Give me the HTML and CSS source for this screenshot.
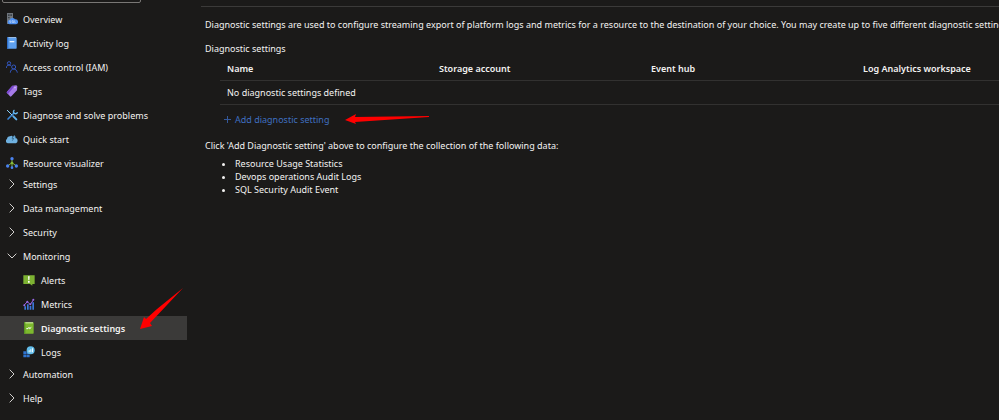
FILE: index.html
```html
<!DOCTYPE html>
<html lang="en">
<head>
    <meta charset="UTF-8">
    <meta name="viewport" content="width=device-width, initial-scale=1.0">
    <title>Diagnostic settings</title>
    <link rel="stylesheet" href="styles.css">
</head>
<body>

    <div class="layout">
        <nav class="sidebar">
            <input class="search" type="search" aria-label="Search">

            <ul class="menu">
                <li><a class="item" href="#">
                    <svg class="icon" viewBox="0 0 36 36">
                        <path fill="#6f757c" d="M3 0h18v33H3z"/>
                        <path fill="#3c4248" d="M6 4h5v5H6zM13 4h5v5h-5zM6 12h5v4H6z"/>
                        <path fill="#4d8ff0" d="M12 34a6 6 0 0 1-1-13 9 9 0 0 1 16-2 7 7 0 0 1 3 15z"/>
                        <path fill="none" stroke="#d8e9ff" stroke-width="1.6" d="M14 23h-3v3h3v3h-3M18 23h4v5h-4zM21 27l2 3M26 22v7h3"/>
                    </svg>
                    Overview
                </a></li>
                <li><a class="item" href="#">
                    <svg class="icon" viewBox="0 0 36 36">
                        <rect x="3" y="1" width="29" height="34" rx="2" fill="#5ea0ef"/>
                        <path fill="#2f6fc9" d="M3 1h4v34H5a2 2 0 0 1-2-2z"/>
                        <path fill="#c5dffa" d="M7 1h23v2H7z"/>
                        <path fill="#eaf4ff" d="M11 12h14v4H11z"/>
                    </svg>
                    Activity log
                </a></li>
                <li><a class="item" href="#">
                    <svg class="icon" viewBox="0 0 36 36" fill="none" stroke="#3357c0" stroke-width="3">
                        <circle cx="9" cy="7" r="5"/>
                        <path d="M1 21c0-6 4-9 8-9 3 0 5 1 6 3"/>
                        <circle cx="23" cy="18" r="6"/>
                        <path d="M13 35c0-7 5-11 10-11s10 4 11 11"/>
                    </svg>
                    Access control (IAM)
                </a></li>
                <li><a class="item" href="#">
                    <svg class="icon" viewBox="0 0 36 36">
                        <path fill="#a67be8" d="M19 2l12-1 3 3-1 12-17 18q-2 2-4 0L3 24q-2-2 0-4z"/>
                        <path fill="#7a48d0" d="M19 2L3 20q-2 2 0 4l3 3L25 4z"/>
                        <circle cx="27" cy="8" r="2" fill="#e6d8ff"/>
                    </svg>
                    Tags
                </a></li>
                <li><a class="item" href="#">
                    <svg class="icon" viewBox="0 0 36 36" fill="none" stroke-linecap="round">
                        <path stroke="#3a86d6" stroke-width="5" d="M6 30L24 12"/>
                        <path stroke="#66b8f0" stroke-width="4" d="M24 4q-4 6 1 9 4 3 9-2"/>
                        <path stroke="#8ed2fa" stroke-width="3" d="M4 4l14 14"/>
                        <path stroke="#5fb2ee" stroke-width="6" d="M22 22l9 9"/>
                    </svg>
                    Diagnose and solve problems
                </a></li>
                <li><a class="item" href="#">
                    <svg class="icon" viewBox="0 0 36 36">
                        <path fill="#6fb1e0" d="M7 31a7 7 0 0 1-4-13 9 9 0 0 1 9-8l5-2 4 3 5-4 4 8a9 9 0 0 1 0 16z"/>
                        <path fill="none" stroke="#23506f" stroke-width="2" d="M22 8l-4 8h5l-4 7M27 10l2 6"/>
                    </svg>
                    Quick start
                </a></li>
                <li><a class="item" href="#">
                    <svg class="icon" viewBox="0 0 36 36">
                        <path fill="none" stroke="#86b93a" stroke-width="3" d="M18 6v24M18 17L5 27M18 17l13 10"/>
                        <g fill="#4a83f0">
                            <circle cx="18" cy="5" r="5"/>
                            <circle cx="5" cy="27" r="5"/>
                            <circle cx="31" cy="27" r="5"/>
                            <circle cx="18" cy="32" r="4"/>
                        </g>
                        <circle cx="18" cy="18" r="4" fill="#86b93a"/>
                    </svg>
                    Resource visualizer
                </a></li>
            </ul>

            <ul class="groups">
                <li class="group">
                    <button class="group-title" aria-expanded="false">
                        <svg class="icon chevron" viewBox="0 0 36 36"><path d="M11 5l13 13-13 13"/></svg>
                        Settings
                    </button>
                </li>
                <li class="group">
                    <button class="group-title" aria-expanded="false">
                        <svg class="icon chevron" viewBox="0 0 36 36"><path d="M11 5l13 13-13 13"/></svg>
                        Data management
                    </button>
                </li>
                <li class="group">
                    <button class="group-title" aria-expanded="false">
                        <svg class="icon chevron" viewBox="0 0 36 36"><path d="M11 5l13 13-13 13"/></svg>
                        Security
                    </button>
                </li>
                <li class="group open">
                    <button class="group-title" aria-expanded="true">
                        <svg class="icon chevron" viewBox="0 0 36 36"><path d="M5 11l13 13 13-13"/></svg>
                        Monitoring
                    </button>
                    <ul class="submenu">
                        <li><a class="subitem" href="#">
                            <svg class="icon" viewBox="0 0 36 36">
                                <path fill="#7db232" d="M1 4h34v26h-7v5l-7-5H1z"/>
                                <path fill="#fff" d="M15 7h5l-1 12h-3zM15 21h5v5h-5z"/>
                            </svg>
                            Alerts
                        </a></li>
                        <li><a class="subitem" href="#">
                            <svg class="icon" viewBox="0 0 36 36">
                                <path fill="#3b77d8" d="M4 25h5v10H4zM12 19h5v16h-5zM20 24h5v11h-5zM28 13h5v22h-5z"/>
                                <path fill="none" stroke="#9a68e8" stroke-width="3" d="M3 22l10-11 9 9L32 4"/>
                                <g fill="#9a68e8">
                                    <circle cx="4" cy="22" r="3"/>
                                    <circle cx="13" cy="11" r="3"/>
                                    <circle cx="22" cy="19" r="3"/>
                                    <circle cx="31" cy="5" r="3"/>
                                </g>
                            </svg>
                            Metrics
                        </a></li>
                        <li><a class="subitem selected" href="#" aria-current="page">
                            <svg class="icon" viewBox="0 0 36 36">
                                <rect x="3" y="1" width="29" height="34" rx="2" fill="#7db92e"/>
                                <path fill="#5a9422" d="M3 1h4v34H5a2 2 0 0 1-2-2z"/>
                                <path fill="#d5efb0" d="M7 1h23v3H7z"/>
                                <path fill="none" stroke="#fff" stroke-width="3" d="M10 20h5l3-4 2 4 5-4"/>
                            </svg>
                            Diagnostic settings
                        </a></li>
                        <li><a class="subitem" href="#">
                            <svg class="icon" viewBox="0 0 36 36">
                                <path fill="#2f74d0" d="M1 16h9v9H1zM1 26h9v8H1zM11 26h9v8h-9zM11 16h9v9h-9z"/>
                                <circle cx="23" cy="13" r="12" fill="#62bdea"/>
                                <path fill="#eefaff" d="M17 13h3v6h-3zM22 10h3v9h-3zM27 7h3v12h-3z"/>
                            </svg>
                            Logs
                        </a></li>
                    </ul>
                </li>
                <li class="group">
                    <button class="group-title" aria-expanded="false">
                        <svg class="icon chevron" viewBox="0 0 36 36"><path d="M11 5l13 13-13 13"/></svg>
                        Automation
                    </button>
                </li>
                <li class="group">
                    <button class="group-title" aria-expanded="false">
                        <svg class="icon chevron" viewBox="0 0 36 36"><path d="M11 5l13 13-13 13"/></svg>
                        Help
                    </button>
                </li>
            </ul>

            <svg class="arrow arrow-menu" viewBox="0 0 44 42">
                <path fill="#f00" d="M43 0L10 35l2 3L0 41l4-12 2 2L17 21z"/>
            </svg>
        </nav>

        <main class="content">
            <p class="intro">Diagnostic settings are used to configure streaming export of platform logs and metrics for a resource to the destination of your choice. You may create up to five different diagnostic settings</p>
            <p class="caption" id="settings-caption">Diagnostic settings</p>

            <table class="settings" aria-labelledby="settings-caption">
                <thead>
                    <tr>
                        <th>Name</th>
                        <th>Storage account</th>
                        <th>Event hub</th>
                        <th>Log Analytics workspace</th>
                    </tr>
                </thead>
                <tbody>
                    <tr>
                        <td colspan="4">No diagnostic settings defined</td>
                    </tr>
                </tbody>
            </table>

            <div class="add-row">
                <button class="add">
                    <svg class="plus" viewBox="0 0 7 7"><path d="M3 0h1v3h3v1H4v3H3V4H0V3h3z"/></svg>
                    Add diagnostic setting
                </button>
                <svg class="arrow arrow-add" viewBox="0 0 84 10">
                    <path fill="#f00" d="M0 6l11-6-1 3 74-1v1L10 8l1 2z"/>
                </svg>
            </div>

            <p class="hint">Click 'Add Diagnostic setting' above to configure the collection of the following data:</p>
            <ul class="data-list">
                <li>Resource Usage Statistics</li>
                <li>Devops operations Audit Logs</li>
                <li>SQL Security Audit Event</li>
            </ul>
        </main>
    </div>

</body>
</html>
```
FILE: styles.css
```css
* {
    box-sizing: border-box;
}

body {
    margin: 0;
    background-color: #1b1a19;
    color: #f3f2f1;
    font-family: "Noto Sans", "Open Sans", sans-serif;
    font-size: 9px;
    line-height: 13px;
    overflow: hidden;
}

ul {
    list-style: none;
    margin: 0;
    padding: 0;
}

p {
    margin: 0;
}

a {
    color: inherit;
    text-decoration: none;
}

button {
    border: none;
    padding: 0;
    background: none;
    color: inherit;
    font: inherit;
    cursor: pointer;
}

.layout {
    display: flex;
    min-height: 100vh;
}

/* left menu */
.sidebar {
    position: relative;
    flex: 0 0 187px;
}

.search {
    display: block;
    width: 139px;
    height: 20px;
    margin: -17px 0 5px 2px;
    border: 1px solid #797775;
    border-radius: 2px;
    background-color: #1b1a19;
    color: inherit;
}

.menu {
    display: flex;
    flex-direction: column;
    gap: 2px;
}

.item,
.group-title,
.subitem {
    display: flex;
    align-items: center;
    gap: 5px;
    width: 100%;
    padding-left: 6px;
}

.item {
    height: 22px;
}

.group {
    margin-bottom: 4px;
}

.group.open {
    margin-bottom: 0;
}

.group-title {
    height: 20px;
}

.submenu {
    padding-top: 2px;
}

.subitem {
    height: 24px;
    gap: 6px;
    padding-left: 23px;
}

.selected {
    background-color: #3b3a39;
    font-weight: 600;
}

.icon {
    flex: none;
    width: 12px;
    height: 12px;
}

.chevron {
    fill: none;
    stroke: #d2d0ce;
    stroke-width: 3;
}

/* right side */
.content {
    flex: 1;
    min-width: 0;
    margin: 6px 0 0 14px;
    padding-left: 4px;
    border-top: 1px solid #3b3a39;
    overflow: hidden;
}

.intro {
    margin-top: 11px;
    white-space: nowrap;
}

.caption {
    margin-top: 11px;
}

.settings {
    width: 848px;
    margin-top: 1px;
    margin-left: 15px;
    border-collapse: collapse;
    table-layout: fixed;
}

.settings th,
.settings td {
    height: 24px;
    padding: 1px 7px 0;
    border-bottom: 1px solid #323130;
    text-align: left;
}

.settings th {
    font-weight: 600;
}

.add-row {
    display: flex;
    align-items: center;
    gap: 16px;
    height: 29px;
    padding-left: 19px;
}

.add {
    display: flex;
    align-items: center;
    gap: 4px;
    color: #3f6fc0;
}

.plus {
    width: 7px;
    height: 7px;
    fill: #34589a;
}

.hint {
    margin-top: 5px;
}

.data-list {
    list-style: disc;
    margin-top: 5px;
    padding-left: 30px;
}

/* red pointers over the page */
.arrow-menu {
    position: absolute;
    left: 140px;
    top: 288px;
    width: 44px;
    height: 42px;
}

.arrow-add {
    width: 84px;
    height: 10px;
}
```
